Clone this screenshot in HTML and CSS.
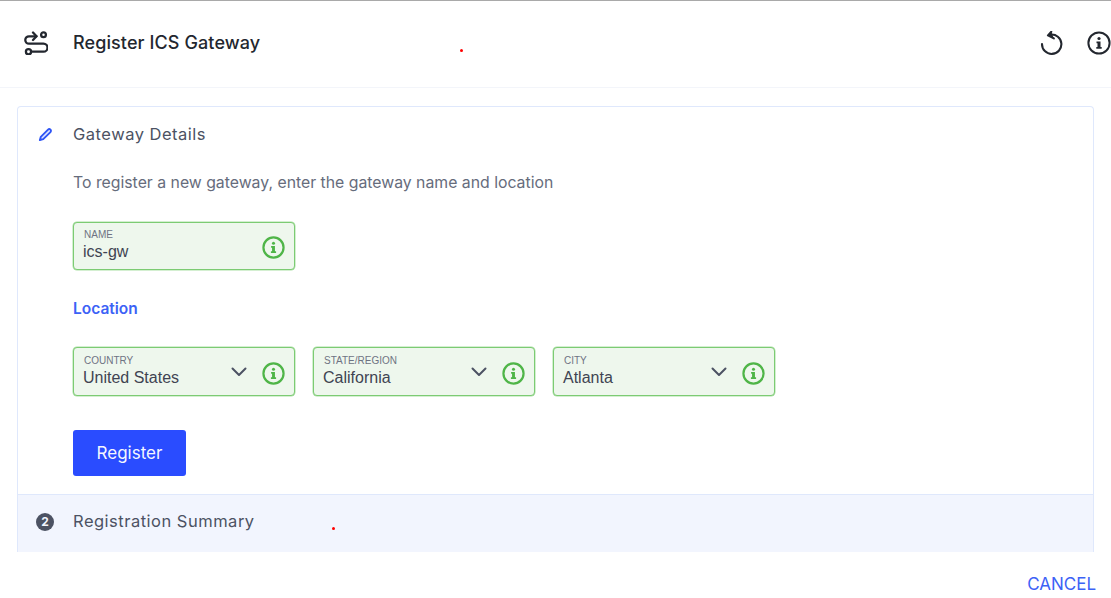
FILE: index.html
```html
<!DOCTYPE html>
<html lang="en">
<head>
<meta charset="utf-8">
<title>Register ICS Gateway</title>
<link rel="stylesheet" href="styles.css">
</head>
<body>
<div class="page">
  <header class="topbar">
    <svg class="route-icon" viewBox="0 0 24 24" fill="none" stroke="#23272f" stroke-width="2.300" stroke-linecap="round" stroke-linejoin="round">
      <path d="M9 1.500 12.500 5.300 9 9"/>
      <path d="M12.500 5.300H5a3.700 3.700 0 0 0 0 7.400H19.500a4 4 0 0 1 0 8H7.500"/>
      <circle cx="19.500" cy="3.800" r="2.400"/>
      <circle cx="4.500" cy="20.700" r="2.600"/>
    </svg>
    <h1 class="title">Register ICS Gateway</h1>
    <div class="top-actions">
      <svg class="refresh-icon" viewBox="0 0 24 24" fill="none" stroke="#23272f" stroke-width="2.100" stroke-linecap="round" stroke-linejoin="round">
        <path d="M11.500 3.600A9.700 9.700 0 1 1 3 13"/>
        <path d="M12.300.8 9 4.400l5.800 3" fill="#23272f"/>
      </svg>
      <svg class="info-icon" viewBox="0 0 24 24" fill="none">
        <circle cx="12" cy="12" r="10.600" stroke="#23272f" stroke-width="2"/>
        <circle cx="12" cy="7.500" r="1.600" fill="#23272f"/>
        <path d="M9.500 10.500h4V16h1.200v1.800H9.300V16h1.200v-3.700h-1z" fill="#23272f"/>
      </svg>
    </div>
  </header>
  <main class="content">
    <div class="card">
      <section class="step-open">
        <div class="step-head">
          <svg class="pencil" viewBox="0 0 16 16" fill="#dfe6ff" stroke="#2f55f5" stroke-width="2" stroke-linejoin="round">
            <path d="M3 10.500 10.700 2.800a1.800 1.800 0 0 1 2.600 2.600L5.600 13 2 14z"/>
          </svg>
          <h2 class="step-title">Gateway Details</h2>
        </div>
        <div class="step-body">
          <p class="intro">To register a new gateway, enter the gateway name and location</p>
          <div class="field field-name">
            <div class="field-text">
              <span class="field-label">NAME</span>
              <span class="field-value">ics-gw</span>
            </div>
            <svg class="ok-icon" viewBox="0 0 24 24" fill="none"><circle cx="12" cy="12" r="10.500" stroke="#4fb548" stroke-width="2.300"/><circle cx="12" cy="7.600" r="1.600" fill="#4fb548"/><path d="M9.500 10.500h4V16h1.200v1.800H9.300V16h1.200v-3.700h-1z" fill="#4fb548"/></svg>
          </div>
          <h3 class="location">Location</h3>
          <div class="field-row">
            <div class="field">
              <div class="field-text"><span class="field-label">COUNTRY</span><span class="field-value">United States</span></div>
              <svg class="chevron" viewBox="0 0 16 10" fill="none" stroke="#4c5263" stroke-width="2" stroke-linecap="round" stroke-linejoin="round"><path d="M1.500 1.500 8 8l6.500-6.500"/></svg>
              <svg class="ok-icon" viewBox="0 0 24 24" fill="none"><circle cx="12" cy="12" r="10.500" stroke="#4fb548" stroke-width="2.300"/><circle cx="12" cy="7.600" r="1.600" fill="#4fb548"/><path d="M9.500 10.500h4V16h1.200v1.800H9.300V16h1.200v-3.700h-1z" fill="#4fb548"/></svg>
            </div>
            <div class="field">
              <div class="field-text"><span class="field-label">STATE/REGION</span><span class="field-value">California</span></div>
              <svg class="chevron" viewBox="0 0 16 10" fill="none" stroke="#4c5263" stroke-width="2" stroke-linecap="round" stroke-linejoin="round"><path d="M1.500 1.500 8 8l6.500-6.500"/></svg>
              <svg class="ok-icon" viewBox="0 0 24 24" fill="none"><circle cx="12" cy="12" r="10.500" stroke="#4fb548" stroke-width="2.300"/><circle cx="12" cy="7.600" r="1.600" fill="#4fb548"/><path d="M9.500 10.500h4V16h1.200v1.800H9.300V16h1.200v-3.700h-1z" fill="#4fb548"/></svg>
            </div>
            <div class="field">
              <div class="field-text"><span class="field-label">CITY</span><span class="field-value">Atlanta</span></div>
              <svg class="chevron" viewBox="0 0 16 10" fill="none" stroke="#4c5263" stroke-width="2" stroke-linecap="round" stroke-linejoin="round"><path d="M1.500 1.500 8 8l6.500-6.500"/></svg>
              <svg class="ok-icon" viewBox="0 0 24 24" fill="none"><circle cx="12" cy="12" r="10.500" stroke="#4fb548" stroke-width="2.300"/><circle cx="12" cy="7.600" r="1.600" fill="#4fb548"/><path d="M9.500 10.500h4V16h1.200v1.800H9.300V16h1.200v-3.700h-1z" fill="#4fb548"/></svg>
            </div>
          </div>
          <button class="register" type="button">Register</button>
        </div>
      </section>
      <section class="step-closed">
        <span class="step-num">2</span>
        <h2 class="step-title">Registration Summary</h2>
      </section>
    </div>
  </main>
  <footer class="footer">
    <button class="cancel" type="button">CANCEL</button>
  </footer>
  <span class="dot dot-a"></span>
  <span class="dot dot-b"></span>
</div>
</body>
</html>
```

FILE: styles.css
```css
* { box-sizing: border-box; }
html, body { margin: 0; padding: 0; background: #fff; }
body { font-family: "Inter", "Liberation Sans", sans-serif; overflow: hidden; }
.page { position: relative; width: 1111px; height: 598px; overflow: hidden; display: flex; flex-direction: column; border-top: 1px solid #a9a9a9; }
.topbar { height: 87px; flex: none; display: flex; align-items: center; padding: 0 0 3px 24px; border-bottom: 1px solid #f3f5fa; }
.route-icon { width: 24px; height: 24px; flex: none; }
.title { margin: 0 0 0 25px; font-size: 18px; font-weight: 500; color: #23272f; letter-spacing: 0.1px; }
.top-actions { margin-left: auto; display: flex; align-items: center; gap: 24px; }
.refresh-icon { width: 24px; height: 24px; }
.info-icon { width: 24px; height: 24px; }
.content { flex: 1; min-height: 0; overflow: hidden; padding: 18px 17px 0; }
.card { width: 1077px; border: 1px solid #dfe8fc; border-bottom: 0; border-radius: 4px 4px 0 0; min-height: 100%; display: flex; flex-direction: column; }
.step-open { height: 387px; flex: none; }
.step-head { display: flex; align-items: center; height: 54px; padding-left: 20px; }
.pencil { width: 15px; height: 15px; flex: none; margin-right: 20px; }
.step-title { margin: 0; font-size: 16.500px; font-weight: 400; color: #4c5263; letter-spacing: 0.5px; }
.step-body { padding-left: 55px; }
.intro { margin: 0; font-size: 15.800px; line-height: 20px; color: #666c7c; padding-top: 12px; }
.field { width: 222px; height: 49px; display: flex; align-items: center; background: #eef7ed; border: 1px solid #7ccb73; box-shadow: 0 0 0 0.5px #a9dfa3; border-radius: 4px; padding: 0 9px; }
.field-name { margin-top: 29px; height: 48px; }
.field-name .field-text { margin-top: -3px; }
.field-text { flex: 1; min-width: 0; margin-top: -2px; display: flex; flex-direction: column; font-family: "Liberation Sans", Arial, sans-serif; }
.field-label { font-size: 10px; line-height: 13px; margin-bottom: 1px; color: #6e7383; margin-left: 1px; }
.field-value { font-size: 16px; line-height: 19px; color: #3f4452; }
.chevron { width: 16px; height: 10px; flex: none; margin: 1px 15px 0 0; }
.ok-icon { width: 23px; height: 23px; flex: none; margin-top: 3px; }
.location { margin: 29px 0 0; font-size: 15.500px; line-height: 20px; font-weight: 600; color: #3c62f6; }
.field-row { display: flex; gap: 18px; margin-top: 28px; }
.register { display: block; margin-top: 34px; width: 113px; height: 46px; border: 0; border-radius: 3px; background: #2a4cff; color: #f4f6ff; font-family: "Inter", "Liberation Sans", sans-serif; font-size: 17px; font-weight: 400; }
.step-closed { flex: 1; display: flex; align-items: center; background: #f2f5fe; border-top: 1px solid #dfe8fc; padding: 0 0 6px 18px; }
.step-num { width: 18px; height: 18px; border-radius: 50%; background: #4c5263; color: #f2f5fe; font-size: 12px; font-weight: 700; display: flex; align-items: center; justify-content: center; margin: 2px 19px 0 0; }
.footer { height: 46px; flex: none; background: #fff; display: flex; align-items: center; justify-content: flex-end; padding-right: 15px; }
.cancel { border: 0; background: none; padding: 0; color: #3c62f6; font-family: "Inter", "Liberation Sans", sans-serif; font-size: 17px; margin-top: 17px; }
.dot { position: absolute; width: 3px; height: 3px; border-radius: 50%; background: #f00; }
.dot-a { left: 460px; top: 48px; }
.dot-b { left: 332px; top: 526px; }
```
